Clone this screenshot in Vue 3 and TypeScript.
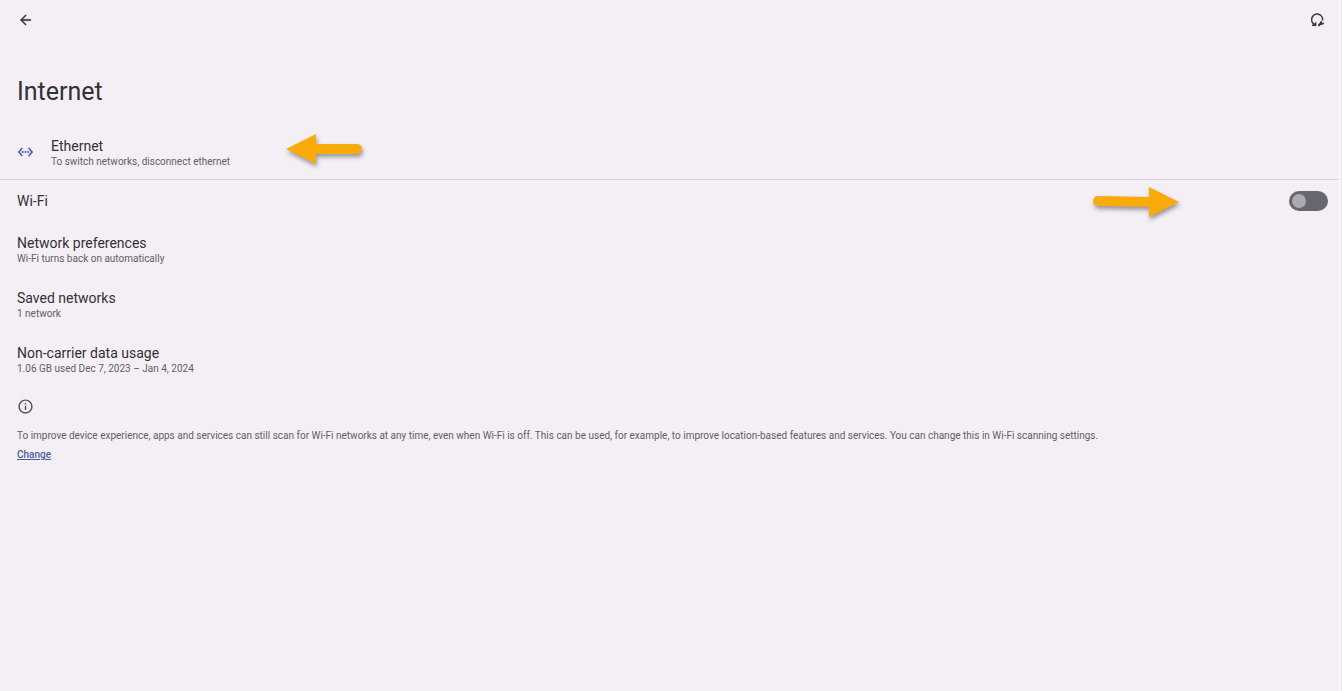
<script setup lang="ts">
import { ref } from 'vue'

interface Preference {
  title: string
  summary: string
}

const wifiOn = ref(false)

const preferences: Preference[] = [
  { title: 'Network preferences', summary: 'Wi-Fi turns back on automatically' },
  { title: 'Saved networks', summary: '1 network' },
  { title: 'Non-carrier data usage', summary: '1.06 GB used Dec 7, 2023 – Jan 4, 2024' },
]
</script>

<template>
  <div class="screen">
    <header class="toolbar">
      <button class="icon-button" type="button" aria-label="Back">
        <svg width="17" height="16" viewBox="0 0 24 24" fill="#38353b">
          <path d="M20 11H7.83l5.59-5.59L12 4l-8 8 8 8 1.41-1.41L7.83 13H20v-2z" stroke="#38353b" stroke-width=".5" />
        </svg>
      </button>
      <button class="icon-button" type="button" aria-label="Reset internet">
        <svg width="16" height="16" viewBox="0 0 16 16" fill="none" stroke="#38353b">
          <path d="M5.4 12.4A5.5 5.5 0 1 1 13.6 8.4" stroke-width="1.6" />
          <path d="M3 13.9h4.4V9.6z" fill="#38353b" stroke="none" />
          <path d="M3 13.3h4" stroke-width="1.4" />
          <path d="M9.4 13.7l3-3" stroke-width="2.2" />
          <path d="M12 8.9a2.3 2.3 0 0 1 1.4-.2l-.9 1.2 1.2 1.2 1.5-.9a2.5 2.5 0 0 1-3.6 2.4 2.4 2.4 0 0 1 .4-3.7z" fill="#38353b" stroke="none" />
        </svg>
      </button>
    </header>

    <h1>Internet</h1>

    <main>
      <button class="row ethernet" type="button">
        <svg class="ethernet-icon" width="17" height="16" viewBox="0 0 24 24" fill="#4560a5" stroke="#4560a5" stroke-width=".6">
          <path d="M7.77 6.76L6.23 5.48.82 12l5.41 6.52 1.54-1.28L3.42 12l4.35-5.24zM7 13h2v-2H7v2zm10-2h-2v2h2v-2zm-6 2h2v-2h-2v2zm6.77-7.52l-1.54 1.28L20.58 12l-4.35 5.24 1.54 1.28L23.18 12l-5.41-6.52z" />
        </svg>
        <span class="labels">
          <span class="title">Ethernet</span>
          <span class="summary">To switch networks, disconnect ethernet</span>
        </span>
        <svg class="pointer pointer-left" width="90" height="44" viewBox="0 0 90 44" aria-hidden="true">
          <path d="M6 19L36 4V14H77a5 5 0 0 1 0 10H36V34z" fill="#f8ab0b" />
        </svg>
      </button>

      <div class="row wifi">
        <label class="title" for="wifi">Wi-Fi</label>
        <input id="wifi" v-model="wifiOn" class="switch" type="checkbox" role="switch" />
        <svg class="pointer pointer-right" width="96" height="44" viewBox="0 0 96 44" aria-hidden="true">
          <path d="M10 14L61 15V5L91 20 61 35V25L10 24a5 5 0 0 1 0-10z" fill="#f8ab0b" />
        </svg>
      </div>

      <button v-for="item in preferences" :key="item.title" class="row preference" type="button">
        <span class="labels">
          <span class="title">{{ item.title }}</span>
          <span class="summary">{{ item.summary }}</span>
        </span>
      </button>
    </main>

    <footer>
      <svg class="info" width="17" height="17" viewBox="0 0 24 24" fill="#504d55">
        <path d="M11 7h2v2h-2zm0 4h2v6h-2zm1-9C6.48 2 2 6.48 2 12s4.48 10 10 10 10-4.48 10-10S17.52 2 12 2zm0 18c-4.41 0-8-3.59-8-8s3.59-8 8-8 8 3.59 8 8-3.59 8-8 8z" />
      </svg>
      <p>To improve device experience, apps and services can still scan for Wi-Fi networks at any time, even when Wi-Fi is off. This can be used, for example, to improve location-based features and services. You can change this in Wi-Fi scanning settings.</p>
      <a href="#wifi">Change</a>
    </footer>
  </div>
</template>

<style>
body {
  margin: 0;
  background: #efedf1;
}
</style>

<style scoped>
.screen {
  box-sizing: border-box;
  min-height: 100vh;
  margin-right: 2px;
  border-right: 1px solid #fff;
  background: #f4eff4;
  color: #333036;
  font-family: Roboto, "Liberation Sans", sans-serif;
}

button {
  border: 0;
  padding: 0;
  background: none;
  color: inherit;
  font: inherit;
  text-align: left;
  cursor: pointer;
}

.toolbar {
  display: flex;
  justify-content: space-between;
  align-items: center;
  height: 40px;
  padding: 0 14px 0 17px;
}

.icon-button {
  display: flex;
}

h1 {
  margin: 0;
  padding: 36px 17px 0;
  font-size: 25px;
  line-height: 32px;
  font-weight: 400;
}

main {
  padding-top: 16px;
}

.row {
  position: relative;
  display: flex;
  align-items: center;
  box-sizing: border-box;
  width: 100%;
  padding: 0 17px;
}

.ethernet {
  height: 56px;
  gap: 17px;
  border-bottom: 1px solid #d3cfd5;
}

.ethernet-icon {
  flex: none;
}

.labels {
  display: flex;
  flex-direction: column;
}

.title {
  font-size: 14px;
  line-height: 18px;
}

.summary {
  color: #615e66;
  font-size: 10px;
  line-height: 14px;
}

.ethernet .labels {
  padding-top: 2px;
}

.wifi {
  height: 41px;
  justify-content: space-between;
  padding-right: 11px;
}

.preference {
  height: 55px;
}

.preference .labels {
  padding-top: 2px;
}

.switch {
  appearance: none;
  display: flex;
  align-items: center;
  box-sizing: border-box;
  width: 39px;
  height: 20px;
  margin: 0;
  padding: 0 3px;
  border-radius: 10px;
  background: #686770;
  cursor: pointer;
}

.switch::before {
  content: "";
  width: 14px;
  height: 14px;
  border-radius: 50%;
  background: #abaab4;
}

.switch:checked {
  justify-content: flex-end;
  background: #4560a5;
}

.pointer {
  position: absolute;
  pointer-events: none;
  filter: drop-shadow(1px 3px 2px rgba(60, 60, 80, 0.5));
}

.pointer-left {
  left: 280px;
  top: 6px;
}

.pointer-right {
  right: 155px;
  top: 2px;
}

footer {
  padding: 12px 17px 0;
  font-size: 10px;
}

.info {
  display: block;
}

p {
  margin: 0;
  padding-top: 14px;
  color: #615e66;
  line-height: 14px;
}

a {
  display: inline-block;
  margin-top: 5px;
  color: #4a619c;
  font-weight: 500;
  line-height: 14px;
}
</style>
